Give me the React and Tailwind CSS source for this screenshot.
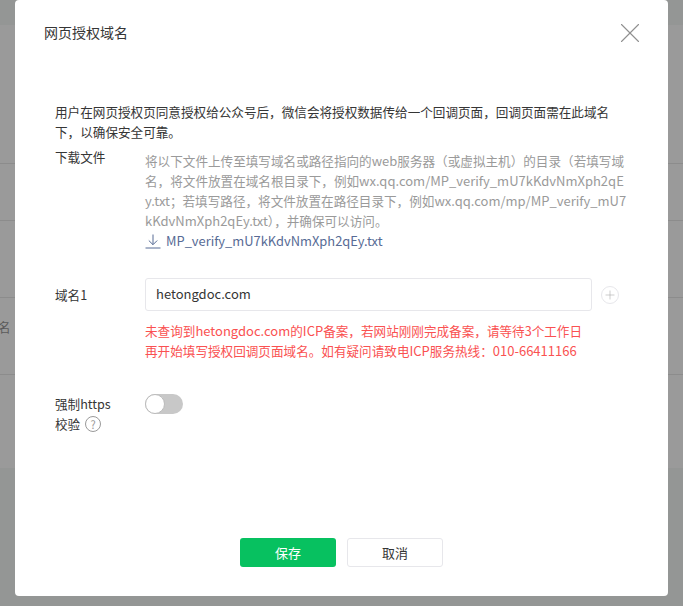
import React from 'react';
import { X, Plus } from 'lucide-react';

const FONT = "font-['Microsoft_YaHei','Noto_Sans_CJK_SC','Noto_Sans',sans-serif]";

// latin runs sit a bit wider than the CJK around them
const L = ({ children }) => <span className="text-[13px]">{children}</span>;

function Row({ label, children, className = '' }) {
  return (
    <div className={`flex ${className}`}>
      <div className="w-[90px] shrink-0 leading-[20px] text-[#353535]">{label}</div>
      <div className="min-w-0 flex-1">{children}</div>
    </div>
  );
}

export default function App() {
  return (
    <div className={`${FONT} relative h-[606px] w-[683px] overflow-hidden bg-[#949695] text-[12.6px]`}>
      {/* page behind the overlay */}
      <div className="h-[25px]"></div>
      <div className="h-[443px] bg-[#9a9a9a]">
        <div className="h-[139px] border-b border-[#8c8c8c]"></div>
        <div className="h-[57px] border-b border-[#8c8c8c]"></div>
        <div className="h-[77px] border-b border-[#8c8c8c]"></div>
        <div className="h-[77px] border-b border-[#8c8c8c]"></div>
      </div>
      <div className="absolute left-[-2px] top-[319px] text-[12.6px] leading-[16px] text-[#5a5a5a]">名</div>

      {/* Dialog */}
      <div className="absolute left-[15px] top-0 flex h-[596px] w-[653px] flex-col rounded-[4px] bg-white">
        <div className="flex items-center justify-between pl-[29px] pr-[21px] pt-[15px]">
          <h3 className="pb-[2px] text-[14px] leading-[34px] text-[#353535]">网页授权域名</h3>
          <X size={34} strokeWidth={0.75} className="text-[#8f8f8f]" />
        </div>

        <div className="pl-[40px] pr-[40px] pt-[51px]">
          <p className="pr-[2px] leading-[20px] text-[#353535]">用户在网页授权页同意授权给公众号后，微信会将授权数据传给一个回调页面，回调页面需在此域名下，以确保安全可靠。</p>

          <Row label="下载文件" className="mt-[5px]">
            <div className="pt-[4px] leading-[20px] text-[#9a9a9a] [word-break:break-all]">
              将以下文件上传至填写域名或路径指向的<L>web</L>服务器（或虚拟主机）的目录（若填写域名，将文件放置在域名根目录下，例如<L>wx.qq.com/MP_verify_mU7kKdvNmXph2qEy.txt</L>；若填写路径，将文件放置在路径目录下，例如<L>wx.qq.com/mp/MP_verify_mU7kKdvNmXph2qEy.txt</L>），并确保可以访问。
            </div>
            <div className="flex h-[20px] items-center gap-[5px] text-[12.9px] text-[#576b95]">
              <svg width="16" height="16" viewBox="0 0 16 16" fill="none" stroke="currentColor" strokeWidth="1">
                <path d="M8 1.5v10M3.8 7.5 8 11.7l4.2-4.2M0.5 15h15" />
              </svg>
              <span>MP_verify_mU7kKdvNmXph2qEy.txt</span>
            </div>
          </Row>

          <Row label={<div className="pt-[7px]">域名1</div>} className="mt-[27px]">
            <div className="flex items-center">
              <div className="flex h-[33px] w-[447px] items-center rounded-[3px] border border-[#e7e7eb] px-[10px] pb-[1px] text-[13px] text-[#353535]">hetongdoc.com</div>
              <div className="ml-[9px] flex h-[18px] w-[18px] items-center justify-center rounded-full border border-[#e7e7eb] text-[#aaa]">
                <Plus size={14} strokeWidth={1} />
              </div>
            </div>
            <div className="mt-[10px] leading-[20px] text-[#fa5151]">
              <div>未查询到<L>hetongdoc.com</L>的<L>ICP</L>备案，若网站刚刚完成备案，请等待3个工作日</div>
              <div>再开始填写授权回调页面域名。如有疑问请致电<L>ICP</L>服务热线：<L>010-66411166</L></div>
            </div>
          </Row>

          <Row
            label={
              <div>
                <div>强制https</div>
                <div className="flex items-center gap-[5px]">
                  校验
                  <span className="flex h-[16px] w-[16px] items-center justify-center rounded-full border border-[#9a9a9a] text-[11px] leading-none text-[#9a9a9a]">?</span>
                </div>
              </div>
            }
            className="mt-[33px]"
          >
            <div className="relative h-[20px] w-[38px] rounded-full bg-[#c8c8c8]">
              <div className="absolute left-0 top-0 h-[20px] w-[20px] rounded-full border border-[#bbb] bg-white"></div>
            </div>
          </Row>
        </div>

        <div className="absolute bottom-[29px] left-0 right-0 flex justify-center gap-[11px]">
          <button className="h-[29px] w-[96px] rounded-[3px] bg-[#07c160] text-[13px] text-white">保存</button>
          <button className="h-[29px] w-[96px] rounded-[3px] border border-[#e7e7eb] bg-white text-[13px] text-[#353535]">取消</button>
        </div>
      </div>
    </div>
  );
}
